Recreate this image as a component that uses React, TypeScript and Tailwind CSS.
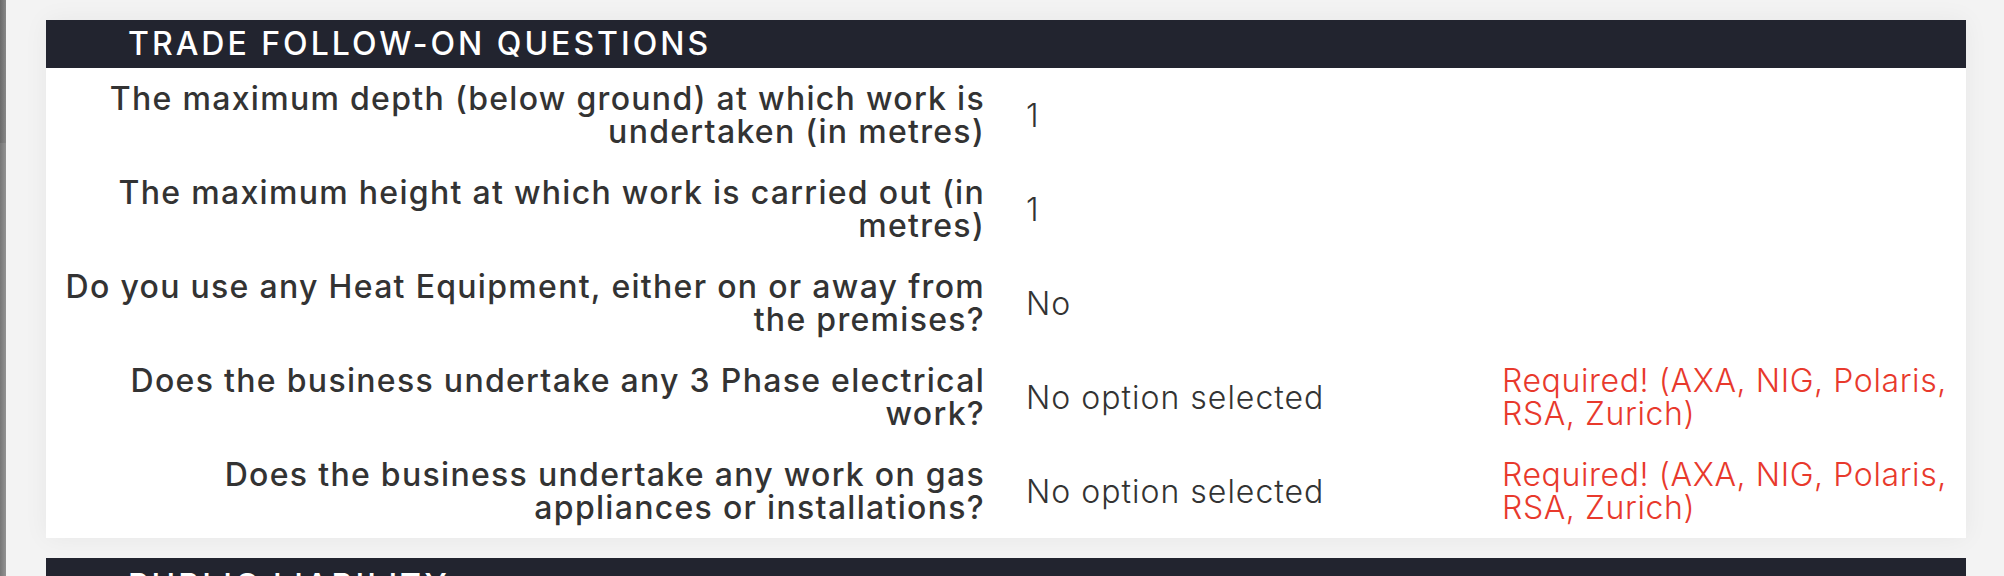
import React from "react";

const rows: { q: string[]; v: string; req?: boolean }[] = [
  { q: ["The maximum depth (below ground) at which work is", "undertaken (in metres)"], v: "1" },
  { q: ["The maximum height at which work is carried out (in", "metres)"], v: "1" },
  { q: ["Do you use any Heat Equipment, either on or away from", "the premises?"], v: "No" },
  { q: ["Does the business undertake any 3 Phase electrical", "work?"], v: "No option selected", req: true },
  { q: ["Does the business undertake any work on gas", "appliances or installations?"], v: "No option selected", req: true },
];

export default function App() {
  return (
    <div
      className="flex h-[576px] w-[2004px] overflow-hidden bg-[#f3f3f3]"
      style={{ fontFamily: "Inter, 'Open Sans', sans-serif" }}
    >
      <div className="flex w-[6px] shrink-0 flex-col">
        <div className="h-[143px] bg-gradient-to-r from-[#6a6a6a] to-[#888888]" />
        <div className="flex-1 bg-gradient-to-r from-[#767676] to-[#939393]" />
      </div>
      <div className="flex w-[1998px] flex-col pl-[40px] pr-[38px]">
        <div className="h-[2px] bg-white" />
        <div className="mt-[20px] bg-white shadow-[0_0_24px_rgba(0,0,0,0.05)]">
          <div className="flex h-[48px] items-center bg-[#22242f] pl-[82px] text-[32px] font-medium uppercase tracking-[3px] text-white">
            Trade Follow-On Questions
          </div>
          {rows.map((r, i) => (
            <div key={i} className="flex h-[94px] items-center">
              <div className="w-[955px] shrink-0 whitespace-nowrap pr-[16px] text-right text-[32px] font-medium leading-[33px] tracking-[1.3px] text-[#333333]">
                {r.q[0]}
                <br />
                {r.q[1]}
              </div>
              <div className="w-[485px] shrink-0 whitespace-nowrap pl-[25px] text-[32px] font-light leading-[33px] tracking-[1px] text-[#333333]">
                {r.v}
              </div>
              {r.req && (
                <div className="whitespace-nowrap pl-[16px] text-[32px] font-light leading-[33px] tracking-[0.6px] text-[#e8392c]">
                  Required! (AXA, NIG, Polaris,
                  <br />
                  RSA, Zurich)
                </div>
              )}
            </div>
          ))}
        </div>
        <div className="mt-[20px] h-[60px] bg-[#22242f] pl-[82px] pt-[8px] text-[32px] font-medium uppercase leading-[40px] tracking-[3px] text-white">
          Public Liability
        </div>
      </div>
    </div>
  );
}
